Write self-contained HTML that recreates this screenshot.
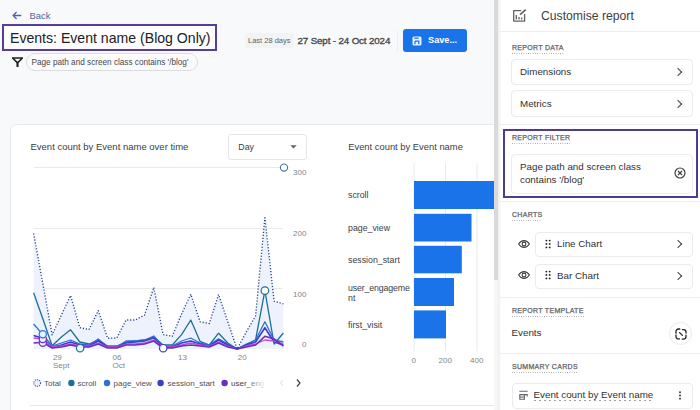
<!DOCTYPE html>
<html><head><meta charset="utf-8">
<style>
*{box-sizing:border-box;margin:0;padding:0}
html,body{width:700px;height:410px;overflow:hidden;background:#f8f9fa;font-family:"Liberation Sans",sans-serif;color:#202124}
.a{position:absolute;white-space:nowrap}
#main{position:absolute;left:0;top:0;width:494px;height:410px;background:#f8f9fa;overflow:hidden}
#scroll{position:absolute;left:494px;top:0;width:4px;height:410px;background:#f7f7f8}
#shadow{position:absolute;left:498px;top:0;width:3px;height:410px;background:linear-gradient(90deg,#ebebec,#fff)}
#thumb{position:absolute;left:494px;top:0;width:4px;height:279.5px;background:#d9dadc}
#panel{position:absolute;left:498px;top:0;width:202px;height:410px;background:#fff}
.sec{position:absolute;left:14px;font-size:7px;letter-spacing:0.3px;color:#5f6368;-webkit-text-stroke:0.25px #5f6368;background:linear-gradient(90deg,#9aa0a6 45%,transparent 45%) 0 100%/2.3px 1px repeat-x;line-height:8px;padding-bottom:2px}
.box{position:absolute;border:1px solid #e9ebed;border-radius:4px;background:#fff}
.hr{position:absolute;left:0;width:202px;height:1px;background:#eceef0}
.chev{position:absolute;width:6px;height:6px;border-right:1.3px solid #3c4043;border-top:1.3px solid #3c4043;transform:rotate(45deg)}
.item{position:absolute;font-size:9.8px;color:#303134;white-space:nowrap}
</style></head><body>
<div id="main">
  <!-- header -->
  <svg class="a" style="left:12px;top:11px" width="10" height="9" viewBox="0 0 10 9"><path d="M9.3 4.5H1.2M4.6 1L1.1 4.5 4.6 8" fill="none" stroke="#4d679c" stroke-width="1.3"/></svg>
  <div class="a" style="left:29.5px;top:9.6px;font-size:9.4px;color:#4d679c">Back</div>
  <div class="a" style="left:2px;top:24px;width:215px;height:27px;border:2px solid #553c9e;background:#fdfdfe"></div>
  <div class="a" style="left:10px;top:30px;font-size:14.1px;color:#202124">Events: Event name (Blog Only)</div>
  <svg class="a" style="left:12px;top:57px" width="11" height="11" viewBox="0 0 11 11"><path d="M0.6 1H10.4L5.5 5.8Z" fill="none" stroke="#202124" stroke-width="1.6" stroke-linejoin="miter"/><path d="M5.5 5.5V10" stroke="#202124" stroke-width="2.1"/></svg>
  <div class="a" style="left:25.5px;top:53px;width:172px;height:17.5px;border:1px solid #dadce0;border-radius:9px;background:#fbfbfc"></div>
  <div class="a" style="left:31.5px;top:58px;font-size:8.2px;color:#44484d">Page path and screen class contains '/blog'</div>

  <div class="a" style="left:245px;top:33px;width:49px;height:15px;border-radius:3px;background:#f1f3f4"></div>
  <div class="a" style="left:248px;top:36px;font-size:7.5px;color:#5f6368">Last 28 days</div>
  <div class="a" style="left:297.5px;top:34.8px;font-size:9.8px;letter-spacing:-0.15px;-webkit-text-stroke:0.35px #44484d;color:#44484d">27 Sept - 24 Oct 2024</div>
  <div class="a" style="left:397px;top:30px;width:1px;height:22px;background:#eeeff1"></div>
  <div class="a" style="left:403px;top:29px;width:64px;height:23px;border-radius:3px;background:#1a73e8"></div>
  <svg class="a" style="left:412px;top:36px" width="10" height="10" viewBox="0 0 10 10"><rect x="0.5" y="0.5" width="9" height="9" rx="1.5" fill="#e8f0fe"/><path d="M2.3 2.2H6.6M3 5.2V8.2M3 5.2H6.8V8.2" fill="none" stroke="#1a73e8" stroke-width="1.2"/></svg>
  <div class="a" style="left:428px;top:35.3px;font-size:9.2px;font-weight:bold;color:#fff">Save...</div>

  <!-- card -->
  <div class="a" style="left:10px;top:124px;width:500px;height:300px;border:1px solid #e6e8eb;border-radius:7px;background:#fff"></div>
  <div class="a" style="left:30.5px;top:141px;font-size:9.5px;color:#3c4043">Event count by Event name over time</div>
  <div class="a" style="left:348.2px;top:141px;font-size:9.4px;color:#3c4043">Event count by Event name</div>
  <div class="a" style="left:228px;top:134px;width:78.5px;height:25.5px;border:1px solid #e3e5e8;border-radius:3px"></div>
  <div class="a" style="left:238.3px;top:141.8px;font-size:8.8px;color:#3c4043">Day</div>
  <svg class="a" style="left:289.5px;top:145px" width="7" height="4" viewBox="0 0 7 4"><path d="M0.3 0.3H6.7L3.5 3.6Z" fill="#5f6368"/></svg>

  <svg class="a" style="left:0;top:0" width="494" height="410" viewBox="0 0 494 410">
    <g stroke="#e8eaed" stroke-width="1">
      <line x1="34" y1="167.5" x2="283" y2="167.5"/>
      <line x1="34" y1="228.5" x2="283" y2="228.5"/>
      <line x1="34" y1="288.5" x2="283" y2="288.5"/>
    </g>
    <polygon fill="#edf2fd" points="33.6,233.5 42.9,284.0 52.1,334.8 61.4,315.0 70.6,295.5 79.8,327.7 89.1,329.4 98.3,310.6 107.6,338.3 116.8,338.0 126.1,320.0 135.3,320.0 144.6,315.0 153.8,287.4 163.1,334.6 172.3,336.3 181.6,314.0 190.8,294.2 200.1,321.8 209.3,323.5 218.6,294.5 227.8,322.0 237.1,349.0 246.3,332.0 255.6,316.0 264.9,217.7 274.1,301.2 283.4,303.8 283.4,349 33.6,349"/>
    <g fill="none" stroke-linejoin="round" stroke-width="1.3">
      <polyline stroke="#1c6f98" points="33.6,292.7 42.9,319.0 52.1,345.7 61.4,337.0 70.6,329.8 79.8,342.0 89.1,344.0 98.3,340.0 107.6,346.0 116.8,346.0 126.1,342.0 135.3,341.0 144.6,340.0 153.8,337.0 163.1,345.0 172.3,345.0 181.6,334.6 190.8,320.0 200.1,341.4 209.3,345.0 218.6,333.2 227.8,343.0 237.1,349.0 246.3,345.0 255.6,339.7 264.9,290.6 274.1,344.0 283.4,333.0"/>
      <polyline stroke="#2e6fd9" points="33.6,324.0 42.9,334.6 52.1,346.0 61.4,343.0 70.6,340.0 79.8,344.0 89.1,345.0 98.3,339.0 107.6,347.0 116.8,347.0 126.1,341.0 135.3,341.0 144.6,340.0 153.8,336.0 163.1,347.0 172.3,346.0 181.6,341.0 190.8,338.0 200.1,343.0 209.3,345.0 218.6,338.8 227.8,344.0 237.1,349.0 246.3,344.0 255.6,340.0 264.9,321.8 274.1,340.0 283.4,342.0"/>
      <polyline stroke="#3b3fc4" stroke-width="1.6" points="33.6,335.4 42.9,338.3 52.1,347.0 61.4,345.0 70.6,342.0 79.8,345.0 89.1,346.0 98.3,341.0 107.6,347.0 116.8,347.0 126.1,343.0 135.3,342.0 144.6,341.0 153.8,338.0 163.1,347.0 172.3,347.0 181.6,343.0 190.8,341.0 200.1,344.0 209.3,346.0 218.6,340.0 227.8,345.0 237.1,349.0 246.3,345.0 255.6,342.0 264.9,327.7 274.1,342.0 283.4,345.0"/>
      <polyline stroke="#c54bd6" points="33.6,338.0 42.9,339.0 52.1,347.0 61.4,346.0 70.6,344.0 79.8,346.0 89.1,346.0 98.3,343.0 107.6,347.0 116.8,347.0 126.1,344.0 135.3,344.0 144.6,343.0 153.8,340.0 163.1,347.0 172.3,347.0 181.6,345.0 190.8,343.0 200.1,345.0 209.3,346.0 218.6,342.0 227.8,346.0 237.1,349.0 246.3,346.0 255.6,344.0 264.9,340.0 274.1,341.0 283.4,344.0"/>
      <polyline stroke="#6a2fc2" stroke-width="1.6" points="33.6,343.0 42.9,342.3 52.1,348.0 61.4,347.0 70.6,345.0 79.8,347.0 89.1,347.0 98.3,344.0 107.6,348.0 116.8,348.0 126.1,345.0 135.3,345.0 144.6,344.0 153.8,341.0 163.1,348.0 172.3,348.0 181.6,346.0 190.8,345.0 200.1,346.0 209.3,347.0 218.6,343.0 227.8,347.0 237.1,349.0 246.3,347.0 255.6,345.0 264.9,336.3 274.1,339.0 283.4,346.0"/>
      <polyline stroke="#24478a" stroke-width="1.35" stroke-dasharray="1.2 1.8" stroke-linecap="butt" points="33.6,233.5 42.9,284.0 52.1,334.8 61.4,315.0 70.6,295.5 79.8,327.7 89.1,329.4 98.3,310.6 107.6,338.3 116.8,338.0 126.1,320.0 135.3,320.0 144.6,315.0 153.8,287.4 163.1,334.6 172.3,336.3 181.6,314.0 190.8,294.2 200.1,321.8 209.3,323.5 218.6,294.5 227.8,322.0 237.1,349.0 246.3,332.0 255.6,316.0 264.9,217.7 274.1,301.2 283.4,303.8"/>
    </g>
    <g stroke-width="1.2">
      <circle cx="42.8" cy="342.8" r="3.6" fill="#f6e8fb" stroke="#6a2fc2"/>
      <circle cx="42.8" cy="339" r="3.6" fill="#f6e8fb" stroke="#5a35c0"/>
      <circle cx="42.8" cy="334.3" r="3.6" fill="#e0f5fb" stroke="#2e6fd9"/>
      <circle cx="80.1" cy="348.2" r="3.7" fill="#e6f7fb" stroke="#1c6f98"/>
      <circle cx="163.2" cy="348.2" r="3.7" fill="#fff" stroke="#3b3fc4"/>
      <circle cx="264.9" cy="290.6" r="3.8" fill="#fff" stroke="#1c6f98"/>
      <circle cx="284" cy="167.6" r="3.6" fill="#fff" stroke="#4a76bd"/>
    </g>
    <g font-family="Liberation Sans" font-size="8" fill="#80868b">
      <text x="293" y="174.5">300</text>
      <text x="293" y="235.5">200</text>
      <text x="293" y="296.5">100</text>
      <text x="302" y="346.5">0</text>
      <text x="52.9" y="360">29</text>
      <text x="52.9" y="368">Sept</text>
      <text x="112.6" y="360">06</text>
      <text x="112.6" y="368">Oct</text>
      <text x="178" y="360">13</text>
      <text x="237.8" y="360">20</text>
    </g>
    <!-- bar chart -->
    <g stroke="#e8eaed" stroke-width="1">
      <line x1="414" y1="163" x2="414" y2="351"/>
      <line x1="445.5" y1="163" x2="445.5" y2="351"/>
      <line x1="477" y1="163" x2="477" y2="351"/>
    </g>
    <g fill="#1a73e8">
      <rect x="414" y="181" width="80" height="28"/>
      <rect x="414" y="213.8" width="57.5" height="27.7"/>
      <rect x="414" y="245.8" width="47.8" height="27.5"/>
      <rect x="414" y="278" width="40" height="28"/>
      <rect x="414" y="310.4" width="32" height="28"/>
    </g>
    <g font-family="Liberation Sans" font-size="8" fill="#80868b" text-anchor="middle">
      <text x="413.8" y="362.8">0</text>
      <text x="445.3" y="362.8">200</text>
      <text x="476.7" y="362.8">400</text>
    </g>
    <g font-family="Liberation Sans" font-size="8.8" fill="#3c4043">
      <text x="348" y="197.8">scroll</text>
      <text x="348" y="231">page_view</text>
      <text x="348" y="263">session_start</text>
      <text x="348" y="291" letter-spacing="-0.15">user_engageme</text>
      <text x="348" y="300.5">nt</text>
      <text x="348" y="327.5">first_visit</text>
    </g>
    <line x1="30" y1="405.5" x2="494" y2="405.5" stroke="#e3e5e8" stroke-width="1"/>
    <!-- legend -->
    <circle cx="37.2" cy="383" r="3.4" fill="#e8eefa" stroke="#4a64a8" stroke-width="1.1" stroke-dasharray="1.2 1"/>
    <circle cx="71.4" cy="383" r="3.2" fill="#1c6f98"/>
    <circle cx="107" cy="383" r="3.2" fill="#2e6fd9"/>
    <circle cx="160.6" cy="383" r="3.2" fill="#3b3fc4"/>
    <circle cx="224.6" cy="383" r="3.2" fill="#6a2fc2"/>
    <g font-family="Liberation Sans" font-size="8" fill="#4d5156">
      <text x="44" y="385.8">Total</text>
      <text x="77.5" y="385.8">scroll</text>
      <text x="113.6" y="385.8">page_view</text>
      <text x="167.6" y="385.8">session_start</text>
    </g>
    <defs><linearGradient id="fade" x1="0" x2="1"><stop offset="0" stop-color="#3c4043"/><stop offset="0.45" stop-color="#3c4043"/><stop offset="1" stop-color="#3c4043" stop-opacity="0.1"/></linearGradient></defs>
    <text x="231" y="385.8" font-family="Liberation Sans" font-size="8" fill="url(#fade)">user_eng</text>
    <path d="M283 380L280.5 383 283 386" fill="none" stroke="#dadce0" stroke-width="1"/>
    <path d="M297 379.5L300 383 297 386.5" fill="none" stroke="#3c4043" stroke-width="1.2"/>
  </svg>
</div>
<div id="scroll"></div>
<div id="thumb"></div>

<div id="panel">
  <div id="shadow" style="left:0"></div>
  <svg class="a" style="left:14px;top:9px" width="15" height="14" viewBox="0 0 15 14"><path d="M9.2 1.7H1.7V12.1H12.6V5" fill="none" stroke="#5f6368" stroke-width="1.3" stroke-linejoin="round"/><path d="M8.1 5.7L13.7 0.7" stroke="#5f6368" stroke-width="1.7"/><path d="M4.3 5.9V10.5M7 8.1V10.5M9.7 8.6V10.5" stroke="#5f6368" stroke-width="1.3"/></svg>
  <div class="item" style="left:43px;top:8.5px;font-size:12.2px;color:#3c4043">Customise report</div>
  <div class="hr" style="top:30.5px"></div>

  <div class="sec" style="top:44px">REPORT DATA</div>
  <div class="box" style="left:13px;top:58.5px;width:182px;height:26.5px"></div>
  <div class="item" style="left:22px;top:66px">Dimensions</div>
  <div class="chev" style="left:176.5px;top:69px"></div>
  <div class="box" style="left:13px;top:90px;width:182px;height:26.5px"></div>
  <div class="item" style="left:22px;top:97.5px">Metrics</div>
  <div class="chev" style="left:176.5px;top:100.5px"></div>
  <div class="hr" style="top:124px"></div>

  <div class="a" style="left:5px;top:129px;width:195px;height:68.5px;border:2px solid #4f3a96"></div>
  <div class="sec" style="top:134px">REPORT FILTER</div>
  <div class="box" style="left:13px;top:154px;width:182px;height:39.5px"></div>
  <div class="item" style="left:22px;top:160px;line-height:13.2px">Page path and screen class<br>contains '/blog'</div>
  <svg class="a" style="left:176px;top:167px" width="12" height="12" viewBox="0 0 12 12"><circle cx="6" cy="6" r="5" fill="none" stroke="#3c4043" stroke-width="1.2"/><path d="M4 4L8 8M8 4L4 8" stroke="#3c4043" stroke-width="1.15"/></svg>
  <div class="hr" style="top:201px"></div>

  <div class="sec" style="top:210.5px">CHARTS</div>
  <svg class="a" style="left:19.5px;top:239.5px" width="12" height="8" viewBox="0 0 12 8"><path d="M0.6 4C2.3 1.4 4.1 0.6 6 0.6S9.7 1.4 11.4 4C9.7 6.6 7.9 7.4 6 7.4S2.3 6.6 0.6 4Z" fill="none" stroke="#3c4043" stroke-width="1.1"/><circle cx="6" cy="4" r="1.9" fill="none" stroke="#3c4043" stroke-width="1.1"/></svg>
  <div class="box" style="left:37px;top:231.5px;width:158px;height:25.5px"></div>
  <svg class="a" style="left:46.5px;top:238.5px" width="7" height="10" viewBox="0 0 7 10"><g fill="#202124"><circle cx="1.4" cy="1.6" r="0.95"/><circle cx="4.7" cy="1.6" r="0.95"/><circle cx="1.4" cy="4.9" r="0.95"/><circle cx="4.7" cy="4.9" r="0.95"/><circle cx="1.4" cy="8.4" r="0.95"/><circle cx="4.7" cy="8.4" r="0.95"/></g></svg>
  <div class="item" style="left:59px;top:238px">Line Chart</div>
  <div class="chev" style="left:176.5px;top:241px"></div>
  <svg class="a" style="left:19.5px;top:271px" width="12" height="8" viewBox="0 0 12 8"><path d="M0.6 4C2.3 1.4 4.1 0.6 6 0.6S9.7 1.4 11.4 4C9.7 6.6 7.9 7.4 6 7.4S2.3 6.6 0.6 4Z" fill="none" stroke="#3c4043" stroke-width="1.1"/><circle cx="6" cy="4" r="1.9" fill="none" stroke="#3c4043" stroke-width="1.1"/></svg>
  <div class="box" style="left:37px;top:263.5px;width:158px;height:25.5px"></div>
  <svg class="a" style="left:46.5px;top:270px" width="7" height="10" viewBox="0 0 7 10"><g fill="#202124"><circle cx="1.4" cy="1.6" r="0.95"/><circle cx="4.7" cy="1.6" r="0.95"/><circle cx="1.4" cy="4.9" r="0.95"/><circle cx="4.7" cy="4.9" r="0.95"/><circle cx="1.4" cy="8.4" r="0.95"/><circle cx="4.7" cy="8.4" r="0.95"/></g></svg>
  <div class="item" style="left:59px;top:269.5px">Bar Chart</div>
  <div class="chev" style="left:176.5px;top:272.5px"></div>
  <div class="hr" style="top:297px"></div>

  <div class="sec" style="top:306.5px">REPORT TEMPLATE</div>
  <div class="item" style="left:13.5px;top:327px">Events</div>
  <div class="a" style="left:171px;top:322px;width:23px;height:23px;border-radius:50%;border:1px solid #e8eaed;background:#fff"></div>
  <svg class="a" style="left:176.5px;top:327.5px" width="12" height="12" viewBox="0 0 12 12"><path d="M1 5.2V3.5A2.5 2.5 0 0 1 3.5 1H4.8M7.4 1.6H8.6A2.4 2.4 0 0 1 11 4V5M1 7V8.4A2.5 2.5 0 0 0 3.5 10.9H4.4M11 7.2V8.6A2.5 2.5 0 0 1 8.5 11.1H7.2M4.6 4.6L7.4 7.4" fill="none" stroke="#202124" stroke-width="1.3" stroke-linecap="round"/></svg>
  <div class="hr" style="top:353px"></div>

  <div class="sec" style="top:362.5px">SUMMARY CARDS</div>
  <div class="box" style="left:13.5px;top:383px;width:181px;height:25.5px"></div>
  <svg class="a" style="left:21px;top:390px" width="10" height="10" viewBox="0 0 10 10"><path d="M0.3 1.3H8.6M0.8 4.6H5.4V9.3H0.8ZM0.8 7H5.4M5.4 4.6H8.2V6.4" fill="none" stroke="#5f6368" stroke-width="1.05"/></svg>
  <div class="item" style="left:35.5px;top:390px;background:linear-gradient(90deg,#9aa0a6 50%,transparent 50%) 0 100%/5px 1px repeat-x;line-height:10px;padding-bottom:1.2px">Event count by Event name</div>
  <svg class="a" style="left:180px;top:391px" width="4" height="9" viewBox="0 0 4 9"><g fill="#3c4043"><circle cx="2" cy="1.2" r="1"/><circle cx="2" cy="4.5" r="1"/><circle cx="2" cy="7.8" r="1"/></g></svg>
</div>
</body></html>
